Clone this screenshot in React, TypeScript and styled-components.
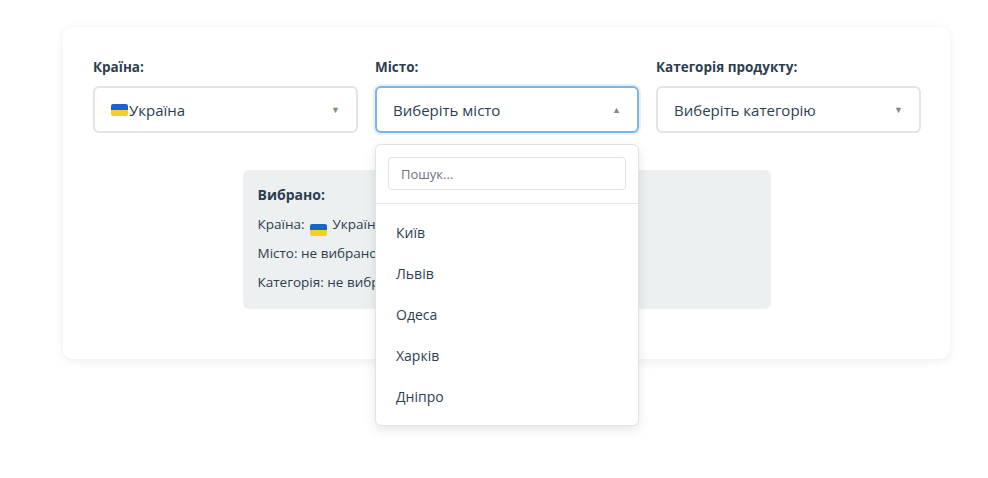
import React from "react";
import styled, { createGlobalStyle } from "styled-components";

const Global = createGlobalStyle`
  body { margin: 0; background: #fff; font-family: "Open Sans", "Noto Sans", sans-serif; color: #2c3e50; }
`;
const Page = styled.div`padding: 27px 38px 0 63px; min-height: 478px; box-sizing: border-box;`;
const Card = styled.div`
  width: 887px; box-sizing: border-box; background: #fff; border-radius: 10px;
  box-shadow: 0 2px 10px rgba(0,0,0,0.08); padding: 31px 30px 50px 30px; position: relative;
`;
const Row = styled.div`display: grid; grid-template-columns: 265px 264px 265px; gap: 17px;`;
const Field = styled.div`position: relative; display: flex; flex-direction: column;`;
const Label = styled.div`font-size: 13.5px; font-weight: 700; color: #2c3e50; margin-bottom: 9px; line-height: 19px;`;
const Select = styled.div<{ $open?: boolean }>`
  height: 47px; box-sizing: border-box; border: 2px solid ${p => p.$open ? "#7fb2e5" : "#e1e5e8"};
  border-radius: 6px; display: flex; align-items: center; justify-content: space-between;
  padding: 0 16px 0 16px; font-size: 15px; color: #2c3e50; background: #fff;
  ${p => p.$open ? "box-shadow: 0 0 0 2px rgba(52,152,219,0.12);" : ""}
`;
const Value = styled.span`display: inline-flex; align-items: center;`;
const Arrow = styled.span`font-size: 9px; color: #7f8c8d;`;
const Flag = styled.span`
  display: inline-flex; flex-direction: column; width: 17px; height: 12px; border-radius: 2px; overflow: hidden; margin-right: 1px;
  &::before { content: ""; flex: 1; background: #1b63d0; }
  &::after { content: ""; flex: 1; background: #f7cd2a; }
`;
const InlineFlag = styled(Flag)`vertical-align: -1px; margin: 0 2px;`;
const Menu = styled.div`
  position: absolute; top: 86px; left: 0; width: 264px; box-sizing: border-box; background: #fff;
  border: 1px solid #dfe3e6; border-radius: 6px; box-shadow: 0 4px 12px rgba(0,0,0,0.1); z-index: 2;
`;
const SearchBox = styled.div`padding: 12px 12px 13px; border-bottom: 1px solid #e4e7ea;`;
const Search = styled.div`
  height: 33px; box-sizing: border-box; border: 1px solid #dfe3e6; border-radius: 4px;
  padding: 0 12px; display: flex; align-items: center; font-size: 13px; color: #6c757d;
`;
const List = styled.div`padding: 8px 0 8px;`;
const Item = styled.div`height: 41px; display: flex; align-items: center; padding: 0 20px; font-size: 14px; color: #2c3e50;`;
const Summary = styled.div`
  width: 528px; margin: 37px auto 0; background: #ecf0f1; border-radius: 6px; padding: 13px 15px 12px; box-sizing: border-box;
`;
const SumTitle = styled.div`font-weight: 700; font-size: 14px; line-height: 24px; margin-bottom: 3px;`;
const SumLine = styled.div`font-size: 13.5px; line-height: 29px; color: #2c3e50;`;

export default function App() {
  return (
    <Page>
      <Global />
      <Card>
        <Row>
          <Field>
            <Label>Країна:</Label>
            <Select><Value><Flag />Україна</Value><Arrow>▼</Arrow></Select>
          </Field>
          <Field>
            <Label>Місто:</Label>
            <Select $open>Виберіть місто<Arrow>▲</Arrow></Select>
            <Menu>
              <SearchBox><Search>Пошук...</Search></SearchBox>
              <List>
                {["Київ", "Львів", "Одеса", "Харків", "Дніпро"].map(c => <Item key={c}>{c}</Item>)}
              </List>
            </Menu>
          </Field>
          <Field>
            <Label>Категорія продукту:</Label>
            <Select>Виберіть категорію<Arrow>▼</Arrow></Select>
          </Field>
        </Row>
        <Summary>
          <SumTitle>Вибрано:</SumTitle>
          <SumLine>Країна: <InlineFlag /> Україна</SumLine>
          <SumLine>Місто: не вибрано</SumLine>
          <SumLine>Категорія: не вибрано</SumLine>
        </Summary>
      </Card>
    </Page>
  );
}
